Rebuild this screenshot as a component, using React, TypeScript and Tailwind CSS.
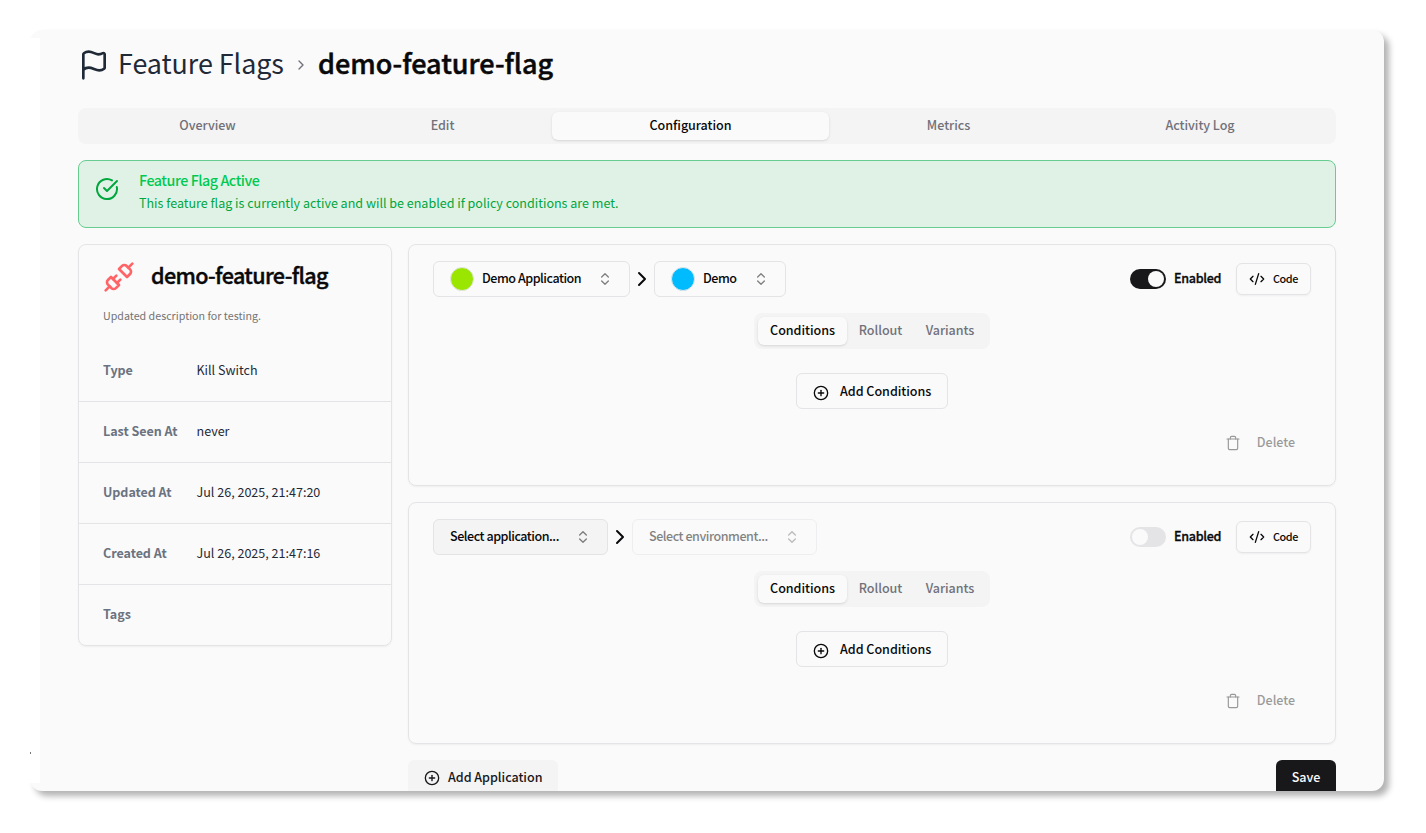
import React from "react";
import {
  Flag,
  ChevronRight,
  CircleCheckBig,
  Unplug,
  ChevronsUpDown,
  CirclePlus,
  CodeXml,
  Trash,
} from "lucide-react";

const tabs = ["Overview", "Edit", "Configuration", "Metrics", "Activity Log"];

const details = [
  { label: "Type", value: "Kill Switch" },
  { label: "Last Seen At", value: "never" },
  { label: "Updated At", value: "Jul 26, 2025, 21:47:20" },
  { label: "Created At", value: "Jul 26, 2025, 21:47:16" },
  { label: "Tags", value: "" },
];

function TopTabs() {
  return (
    <div className="grid h-9 grid-cols-[250fr_220fr_277fr_238fr_265fr] rounded-lg bg-[#f4f4f4] p-1 tracking-[-0.05px]">
      {tabs.map((t) => (
        <div
          key={t}
          className={
            t === "Configuration"
              ? "flex items-center justify-center rounded-md bg-[#fafafa] pb-0.5 font-medium text-[#09090b] shadow-sm"
              : "flex items-center justify-center pb-0.5 pl-px font-medium text-[#71717a]"
          }
        >
          {t}
        </div>
      ))}
    </div>
  );
}

function Select({
  label,
  dot,
  className,
}: {
  label: string;
  dot?: string;
  className: string;
}) {
  return (
    <div
      className={
        "flex h-9 items-center justify-between rounded-md border border-[#e4e4e7] px-4 font-medium tracking-[-0.47px] text-[#09090b] " +
        className
      }
    >
      <div className="flex items-center gap-2 whitespace-nowrap">
        {dot && <span className={"size-6 rounded-full border border-[#e4e4e7] " + dot} />}
        <span className="-mt-0.5">{label}</span>
      </div>
      <ChevronsUpDown size={16} className="opacity-50" />
    </div>
  );
}

function PolicyCard({ enabled, children }: { enabled: boolean; children: React.ReactNode }) {
  return (
    <section className="flex h-[242px] flex-col rounded-lg border border-[#e4e4e7] px-6 py-4 shadow-xs">
      <div className="flex items-center justify-between">
        <div className="flex items-center">{children}</div>
        <div className="flex items-center">
          <div
            className={
              enabled
                ? "flex h-5 w-9 items-center justify-end rounded-full bg-[#18181b] p-0.5"
                : "flex h-5 w-9 items-center rounded-full bg-[#e4e4e7] p-0.5"
            }
          >
            <span className="size-4 rounded-full bg-[#fafafa]" />
          </div>
          <span className="-mt-0.5 ml-2 w-[62px] font-medium tracking-[-0.3px] text-[#09090b] [-webkit-text-stroke:0.3px]">
            Enabled
          </span>
          <div className="flex h-8 w-[75px] items-center gap-2 rounded-md border border-[#e4e4e7] px-3 text-[10.8px] font-medium text-[#09090b] shadow-xs">
            <CodeXml size={16} className="shrink-0" />
            <span className="-mt-0.5 tracking-[-0.4px]">Code</span>
          </div>
        </div>
      </div>
      <div className="mt-4 flex h-9 w-[236px] items-center self-center rounded-lg bg-[#f4f4f5] p-1 font-medium tracking-[-0.05px] text-[#71717a]">
        <div className="flex h-7 w-[89px] items-center justify-center rounded-md bg-[#fafafa] pb-0.5 text-[#09090b] shadow-sm">
          Conditions
        </div>
        <div className="flex w-[67px] justify-center pb-0.5">Rollout</div>
        <div className="flex w-[72px] justify-center pb-0.5">Variants</div>
      </div>
      <div className="mt-6 flex h-9 w-[152px] items-center self-center rounded-md border border-[#e4e4e7] px-4 font-medium text-[#09090b]">
        <CirclePlus size={16} className="mt-[3px] mr-[11px] shrink-0" />
        <span className="-mt-px tracking-[-0.03px] whitespace-nowrap">Add Conditions</span>
      </div>
      <div className="mt-4 flex h-9 items-center self-end px-4 font-medium text-[#09090b] opacity-40">
        <Trash size={16} strokeWidth={1.75} className="mr-4" />
        <span className="-mt-0.5 tracking-[-0.05px]">Delete</span>
      </div>
    </section>
  );
}

export default function App() {
  return (
    <div className="h-[833px] w-[1426px] overflow-hidden bg-white p-[30px] font-['Noto_Sans_CJK_SC',sans-serif] text-[12.55px] leading-5">
      <div className="relative h-[761px] w-[1354px] rounded-xl bg-[#fafafa] shadow-[5px_5px_6px_rgba(0,0,0,0.3)]">
        <div className="absolute top-2 -left-1 h-[745px] w-[14px] bg-white" />
        <div className="absolute top-[722px] left-0 h-0.5 w-px bg-[#777777]" />
        <div className="flex h-full flex-col overflow-hidden rounded-xl pr-12 pl-12">
          <header className="mt-4 flex h-9 shrink-0 items-center">
            <Flag size={32} className="mt-0.5 text-[#1f2937]" />
            <span className="-mt-0.5 ml-2 w-[166px] text-[26.9px] leading-9 tracking-[-0.05px] whitespace-nowrap text-[#1f2937]">
              Feature Flags
            </span>
            <ChevronRight size={16} className="mt-0.5 ml-[9px] text-[#71717a]" />
            <span className="-mt-0.5 ml-[9px] text-[27px] leading-9 font-medium whitespace-nowrap text-[#09090b] [-webkit-text-stroke:0.5px]">
              demo-feature-flag
            </span>
          </header>

          <div className="mt-[26px]">
            <TopTabs />
          </div>

          <div className="mt-4 flex h-[68px] shrink-0 rounded-lg border border-[#66cc8f] bg-[#e0f2e6] px-4 pt-4">
            <CircleCheckBig size={24} className="text-[#00a63e]" />
            <div className="ml-5 flex flex-col">
              <span className="-mt-[7px] text-[14.3px] font-medium tracking-[-0.45px] text-[#00c951]">
                Feature Flag Active
              </span>
              <span className="mt-[3px] tracking-[-0.01px] text-[#00a63e]">
                This feature flag is currently active and will be enabled if policy conditions are met.
              </span>
            </div>
          </div>

          <div className="mt-4 flex items-start gap-4">
            <aside className="h-[402px] w-[314px] shrink-0 rounded-lg border border-[#e4e4e7] shadow-xs">
              <div className="flex items-center px-6 pt-4">
                <Unplug size={32} className="text-[#ff6467]" />
                <span className="-mt-1 ml-4 text-[21.6px] leading-8 font-medium tracking-[-0.65px] whitespace-nowrap text-[#09090b] [-webkit-text-stroke:0.4px]">
                  demo-feature-flag
                </span>
              </div>
              <p className="mt-[13px] px-6 text-[10.7px] text-[#737373]">Updated description for testing.</p>
              <dl className="mt-[15px]">
                {details.map((d, i) => (
                  <div
                    key={d.label}
                    className={
                      i === details.length - 1
                        ? "flex h-[60px] items-center px-6 pb-0.5"
                        : "flex h-[61px] items-center border-b border-[#e4e4e7] px-6 pb-0.5"
                    }
                  >
                    <dt className="w-[93.5px] font-bold tracking-[-0.05px] text-[#6b7280]">{d.label}</dt>
                    <dd className="text-[#1f2937]">{d.value}</dd>
                  </div>
                ))}
              </dl>
            </aside>

            <main className="flex flex-1 flex-col gap-4">
              <PolicyCard enabled>
                <Select label="Demo Application" dot="bg-[#9ae600]" className="w-[197px]" />
                <ChevronRight size={24} className="text-[#09090b]" />
                <Select label="Demo" dot="bg-[#00bcff]" className="w-[132px]" />
              </PolicyCard>
              <PolicyCard enabled={false}>
                <Select label="Select application..." className="w-[175px] bg-[#f4f4f5]" />
                <ChevronRight size={24} className="text-[#09090b]" />
                <Select label="Select environment..." className="w-[185px] opacity-50" />
              </PolicyCard>
              <div className="flex justify-between font-medium">
                <div className="flex h-9 w-[150px] items-center gap-2 rounded-md bg-[#f4f4f5] px-4 whitespace-nowrap text-[#18181b]">
                  <CirclePlus size={16} className="shrink-0" />
                  <span className="-mt-0.5 tracking-[-0.03px]">Add Application</span>
                </div>
                <div className="flex h-9 w-[60px] items-center justify-center rounded-md bg-[#18181b] pb-0.5 text-[#fafafa]">
                  Save
                </div>
              </div>
            </main>
          </div>
        </div>
      </div>
    </div>
  );
}
